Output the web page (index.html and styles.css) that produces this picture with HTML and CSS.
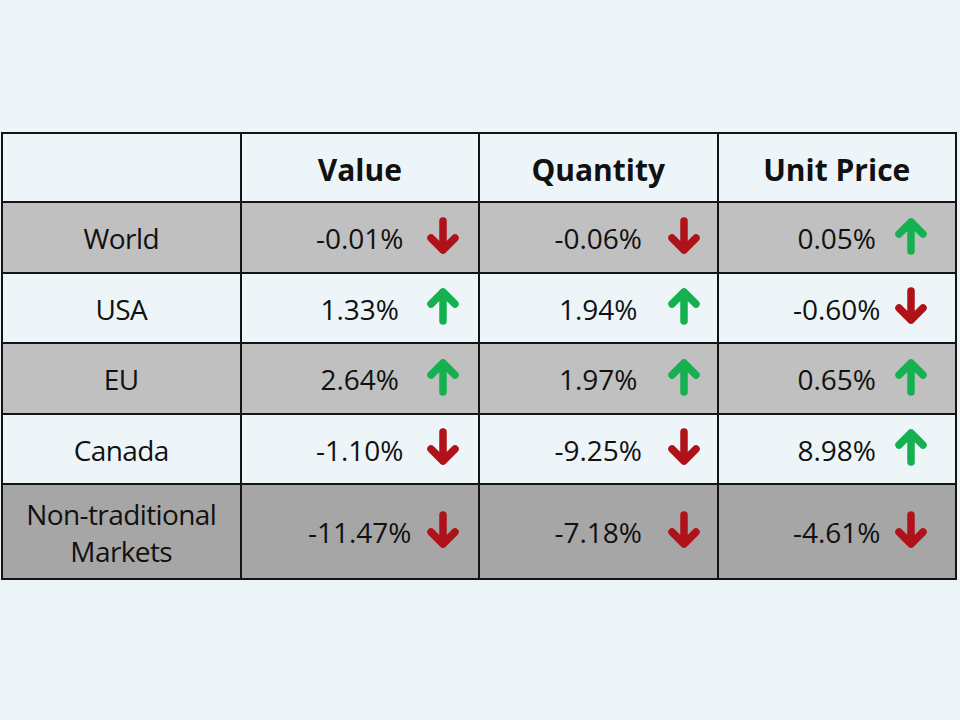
FILE: index.html
```html
<!DOCTYPE html>
<html lang="en">
<head>
<meta charset="utf-8">
<title>Trade change table</title>
<link rel="stylesheet" href="styles.css">
</head>
<body>
<svg width="0" height="0" class="defs" aria-hidden="true">
  <defs>
    <symbol id="down" viewBox="0 0 34 38">
      <path d="M17 4 V33 M5 21 L17 33 L29 21" fill="none" stroke="currentColor" stroke-width="7.5" stroke-linecap="round" stroke-linejoin="round"/>
    </symbol>
    <symbol id="up" viewBox="0 0 34 38">
      <path d="M17 34 V5 M5 17 L17 5 L29 17" fill="none" stroke="currentColor" stroke-width="7.5" stroke-linecap="round" stroke-linejoin="round"/>
    </symbol>
  </defs>
</svg>
<div class="table">
  <div class="cell head"></div>
  <div class="cell head">Value</div>
  <div class="cell head">Quantity</div>
  <div class="cell head">Unit Price</div>

  <div class="cell label gray">World</div>
  <div class="cell num gray c2"><span class="txt">-0.01%</span><svg class="arrow down"><use href="#down"/></svg></div>
  <div class="cell num gray c3"><span class="txt">-0.06%</span><svg class="arrow down"><use href="#down"/></svg></div>
  <div class="cell num gray c4"><span class="txt">0.05%</span><svg class="arrow up"><use href="#up"/></svg></div>

  <div class="cell label light">USA</div>
  <div class="cell num light c2"><span class="txt">1.33%</span><svg class="arrow up"><use href="#up"/></svg></div>
  <div class="cell num light c3"><span class="txt">1.94%</span><svg class="arrow up"><use href="#up"/></svg></div>
  <div class="cell num light c4"><span class="txt">-0.60%</span><svg class="arrow down"><use href="#down"/></svg></div>

  <div class="cell label gray">EU</div>
  <div class="cell num gray c2"><span class="txt">2.64%</span><svg class="arrow up"><use href="#up"/></svg></div>
  <div class="cell num gray c3"><span class="txt">1.97%</span><svg class="arrow up"><use href="#up"/></svg></div>
  <div class="cell num gray c4"><span class="txt">0.65%</span><svg class="arrow up"><use href="#up"/></svg></div>

  <div class="cell label light">Canada</div>
  <div class="cell num light c2"><span class="txt">-1.10%</span><svg class="arrow down"><use href="#down"/></svg></div>
  <div class="cell num light c3"><span class="txt">-9.25%</span><svg class="arrow down"><use href="#down"/></svg></div>
  <div class="cell num light c4"><span class="txt">8.98%</span><svg class="arrow up"><use href="#up"/></svg></div>

  <div class="cell label dark">Non-traditional<br>Markets</div>
  <div class="cell num dark c2"><span class="txt">-11.47%</span><svg class="arrow down"><use href="#down"/></svg></div>
  <div class="cell num dark c3"><span class="txt">-7.18%</span><svg class="arrow down"><use href="#down"/></svg></div>
  <div class="cell num dark c4"><span class="txt">-4.61%</span><svg class="arrow down"><use href="#down"/></svg></div>
</div>
</body>
</html>
```

FILE: styles.css
```css
html, body {
  margin: 0;
  padding: 0;
}

body {
  background: #edf5f9;
  font-family: "Open Sans", "Liberation Sans", sans-serif;
  color: #111;
  width: 960px;
  height: 720px;
  overflow: hidden;
}

.defs {
  position: absolute;
  width: 0;
  height: 0;
}

.table {
  margin: 132px 0 0 1px;
  width: 956px;
  box-sizing: border-box;
  display: grid;
  grid-template-columns: repeat(4, 1fr);
  grid-template-rows: 67px 69px 68px 69px 68px 93px;
  gap: 2px;
  padding: 2px;
  background: #141414;
}

.cell {
  background: #edf5f9;
  font-size: 28px;
  line-height: 37px;
  display: flex;
  align-items: center;
  justify-content: center;
  text-align: center;
  padding-top: 2px;
  box-sizing: border-box;
}

.head {
  font-size: 30px;
  font-weight: 700;
  padding-top: 4px;
}

.label {
  letter-spacing: -0.6px;
}

.gray { background: #c0c0c0; }
.light { background: #edf5f9; }
.dark { background: #a6a6a6; }

.num {
  display: grid;
  grid-template-columns: 1fr auto 1fr;
  align-items: center;
}

.num .txt {
  grid-column: 2;
}

.arrow {
  grid-column: 3;
  justify-self: end;
  width: 34px;
  height: 38px;
  margin-top: -6px;
}

.c2 .arrow { margin-right: 18px; }
.c3 .arrow { margin-right: 16px; }
.c4 .arrow { margin-right: 27px; }

.down { color: #b0121a; }
.up { color: #15b04f; }
```
